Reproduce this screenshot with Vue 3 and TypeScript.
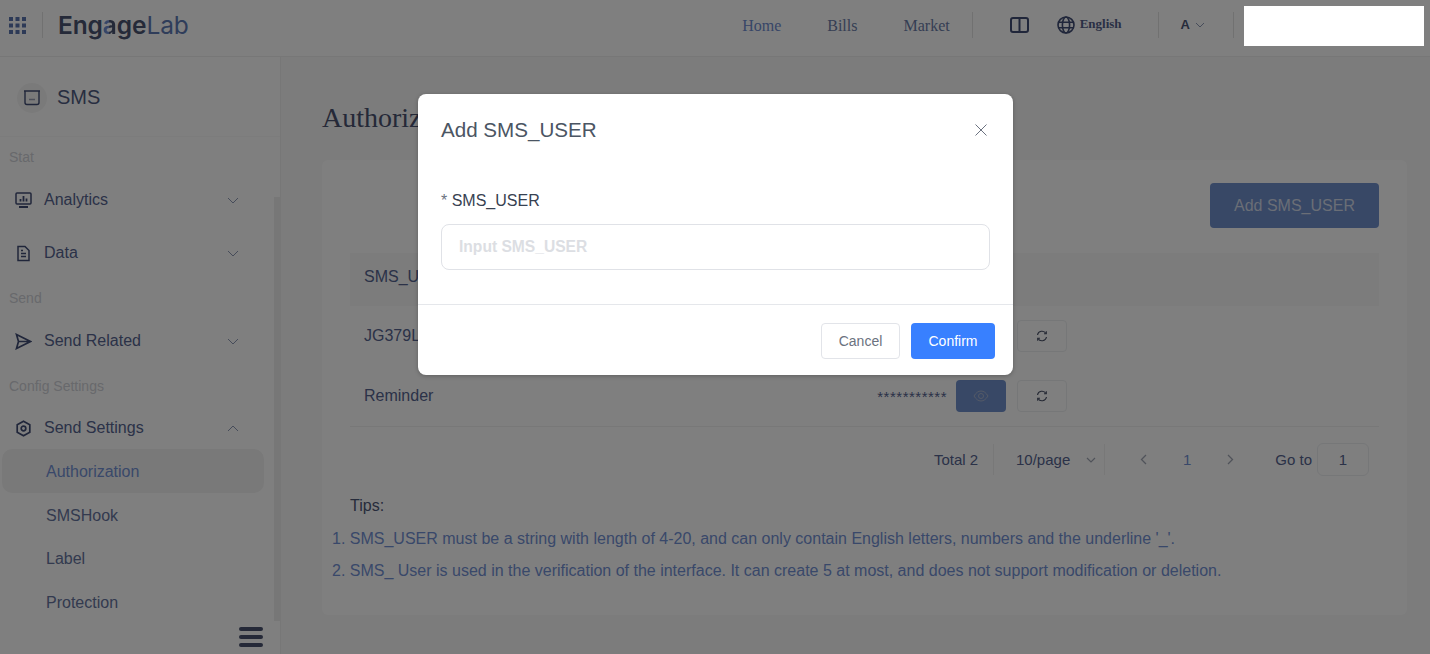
<script setup lang="ts">
import { ref } from 'vue'

interface SubItem {
  label: string
  active?: boolean
}

const subItems: SubItem[] = [
  { label: 'Authorization', active: true },
  { label: 'SMSHook' },
  { label: 'Label' },
  { label: 'Protection' }
]

const rows = [
  { name: 'JG379LX2', top: true },
  { name: 'Reminder', top: false }
]

const tips = [
  "SMS_USER must be a string with length of 4-20, and can only contain English letters, numbers and the underline '_'.",
  'SMS_ User is used in the verification of the interface. It can create 5 at most, and does not support modification or deletion.'
]

const smsUser = ref('')
</script>

<template>
  <div class="page">
    <header class="topbar">
      <svg class="apps" width="17" height="17" viewBox="0 0 17 17">
        <g fill="#5a74ae">
          <rect x="0" y="0" width="4" height="4" /><rect x="6.5" y="0" width="4" height="4" /><rect x="13" y="0" width="4" height="4" />
          <rect x="0" y="6.5" width="4" height="4" /><rect x="6.5" y="6.5" width="4" height="4" /><rect x="13" y="6.5" width="4" height="4" />
          <rect x="0" y="13" width="4" height="4" /><rect x="6.5" y="13" width="4" height="4" /><rect x="13" y="13" width="4" height="4" />
        </g>
      </svg>
      <span class="bar bar-logo"></span>
      <div class="logo"><b>Eng<i>a</i>ge</b><span>Lab</span></div>

      <nav class="nav">
        <a class="nav-home">Home</a>
        <a>Bills</a>
        <a>Market</a>
      </nav>
      <span class="bar bar-nav"></span>
      <svg class="book" width="19" height="16" viewBox="0 0 19 16" fill="none" stroke="#414d75" stroke-width="2">
        <rect x="1" y="1" width="17" height="14" rx="2" />
        <path d="M9.5 1v14" />
      </svg>
      <svg class="globe" width="18" height="18" viewBox="0 0 18 18" fill="none" stroke="#414d75" stroke-width="1.6">
        <circle cx="9" cy="9" r="8" />
        <ellipse cx="9" cy="9" rx="3.6" ry="8" />
        <path d="M1.5 6.3h15M1.5 11.7h15" />
      </svg>
      <span class="lang">English</span>
      <span class="bar bar-lang"></span>
      <span class="user">A</span>
      <svg class="user-arrow" width="10" height="6" viewBox="0 0 10 6" fill="none" stroke="#8d99b5" stroke-width="1">
        <path d="M1 1l4 4 4-4" />
      </svg>
      <span class="bar bar-user"></span>
      <div class="redacted"></div>
    </header>

    <div class="body">
      <aside class="sidebar">
        <div class="product">
          <span class="product-icon">
            <svg width="18" height="16" viewBox="0 0 18 16" fill="none" stroke="#414d75" stroke-width="1.4">
              <path d="M1 1h16M2 1.500v11a2 2 0 0 0 2 2h10a2 2 0 0 0 2-2v-11" />
              <path d="M6.500 9.500h1M8.500 9.500h1M10.500 9.500h1" />
            </svg>
          </span>
          <span class="product-name">SMS</span>
        </div>

        <div class="group-label group-first">Stat</div>
        <div class="menu-item">
          <svg class="menu-icon" width="17" height="17" viewBox="0 0 17 17" fill="none" stroke="#414d75" stroke-width="1.500">
            <rect x="1" y="1" width="15" height="11" rx="1" />
            <path d="M5.500 9.500V7M8.500 9.500V4M11.500 9.500V6.500M4 15h9" stroke-width="1.800" />
          </svg>
          <span>Analytics</span>
          <svg class="chevron" width="12" height="7" viewBox="0 0 12 7" fill="none" stroke="#8d99b5" stroke-width="1">
            <path d="M1 1l5 5 5-5" />
          </svg>
        </div>
        <div class="menu-item menu-item-next">
          <svg class="menu-icon" width="17" height="17" viewBox="0 0 17 17" fill="none" stroke="#414d75" stroke-width="1.500">
            <path d="M3 1.500h7l4 4v10H3z" />
            <path d="M6 8.500h5M6 11.500h5M6 5.500h2" />
          </svg>
          <span>Data</span>
          <svg class="chevron" width="12" height="7" viewBox="0 0 12 7" fill="none" stroke="#8d99b5" stroke-width="1">
            <path d="M1 1l5 5 5-5" />
          </svg>
        </div>

        <div class="group-label">Send</div>
        <div class="menu-item">
          <svg class="menu-icon" width="17" height="17" viewBox="0 0 17 17" fill="none" stroke="#414d75" stroke-width="1.700">
            <path d="M1.500 1.500l14 7-14 7 2-7zM3.500 8.500h12" />
          </svg>
          <span>Send Related</span>
          <svg class="chevron" width="12" height="7" viewBox="0 0 12 7" fill="none" stroke="#8d99b5" stroke-width="1">
            <path d="M1 1l5 5 5-5" />
          </svg>
        </div>

        <div class="group-label group-config">Config Settings</div>
        <div class="menu-item">
          <svg class="menu-icon" width="17" height="17" viewBox="0 0 17 17" fill="none" stroke="#414d75" stroke-width="1.700">
            <path d="M8.500 1.200l6.300 3.600v7.400l-6.300 3.600-6.300-3.600V4.800z" />
            <circle cx="8.500" cy="8.500" r="2.300" />
          </svg>
          <span>Send Settings</span>
          <svg class="chevron" width="12" height="7" viewBox="0 0 12 7" fill="none" stroke="#8d99b5" stroke-width="1">
            <path d="M1 6l5-5 5 5" />
          </svg>
        </div>

        <div
          v-for="item in subItems"
          :key="item.label"
          class="sub-item"
          :class="{ 'sub-item-active': item.active }"
        >
          {{ item.label }}
        </div>

        <div class="scroll-thumb"></div>
        <div class="hamburger"><i></i><i></i><i></i></div>
      </aside>

      <main class="main">
        <h1 class="title">Authorization</h1>
        <section class="card">
          <div class="toolbar">
            <button class="add-btn">Add SMS_USER</button>
          </div>

          <div class="table-head">SMS_USER</div>
          <div v-for="row in rows" :key="row.name" class="table-row" :class="{ 'table-row-last': !row.top }">
            <span class="row-name">{{ row.name }}</span>
            <div class="secret">
              <span class="stars">***********</span>
              <button class="eye-btn">
                <svg width="16" height="12" viewBox="0 0 16 12" fill="none" stroke="#a9b4cc" stroke-width="1">
                  <path d="M1 6c2-3.300 4.300-5 7-5s5 1.700 7 5c-2 3.300-4.300 5-7 5s-5-1.700-7-5z" />
                  <circle cx="8" cy="6" r="2.500" />
                </svg>
              </button>
              <button class="refresh-btn">
                <svg width="12" height="12" viewBox="0 0 12 12" fill="none" stroke="#4a5268" stroke-width="1.100">
                  <path d="M1.500 5A4.600 4.600 0 0 1 10 3.500M10.500 7A4.600 4.600 0 0 1 2 8.500" />
                  <path d="M10.300 1.300v2.400H8M1.700 10.700V8.300H4" />
                </svg>
              </button>
            </div>
          </div>

          <div class="pager">
            <span class="pager-total">Total 2</span>
            <div class="pager-size">
              <span>10/page</span>
              <svg width="10" height="6" viewBox="0 0 10 6" fill="none" stroke="#a0a6b4" stroke-width="1.200">
                <path d="M1 1l4 4 4-4" />
              </svg>
            </div>
            <svg class="pager-prev" width="7" height="11" viewBox="0 0 7 11" fill="none" stroke="#a0a6b4" stroke-width="1.300">
              <path d="M6 1L1.500 5.500 6 10" />
            </svg>
            <span class="pager-num">1</span>
            <svg class="pager-next" width="7" height="11" viewBox="0 0 7 11" fill="none" stroke="#a0a6b4" stroke-width="1.300">
              <path d="M1 1l4.500 4.500L1 10" />
            </svg>
            <span class="pager-goto">Go to</span>
            <span class="pager-input">1</span>
          </div>

          <div class="tips-title">Tips:</div>
          <ol class="tips">
            <li v-for="tip in tips" :key="tip">{{ tip }}</li>
          </ol>
        </section>
      </main>
    </div>

    <div class="mask"></div>

    <div class="dialog">
      <div class="dialog-head">
        <span>Add SMS_USER</span>
        <svg width="12" height="12" viewBox="0 0 12 12" fill="none" stroke="#6b7280" stroke-width="1">
          <path d="M.5.500l11 11M11.500.500l-11 11" />
        </svg>
      </div>
      <div class="dialog-body">
        <label class="field-label"><em>*</em> SMS_USER</label>
        <input v-model="smsUser" class="field-input" placeholder="Input SMS_USER" />
      </div>
      <div class="dialog-foot">
        <button class="btn-cancel">Cancel</button>
        <button class="btn-confirm">Confirm</button>
      </div>
    </div>
  </div>
</template>

<style>
html,
body {
  margin: 0;
  height: 100%;
  overflow: hidden;
}
</style>

<style scoped>
.page {
  position: relative;
  width: 1430px;
  height: 654px;
  overflow: hidden;
  background: #f8f8f8;
  font-family: "Liberation Sans", Arial, sans-serif;
  color: #566490;
}

button {
  font-family: inherit;
  cursor: pointer;
}

/* top bar */
.topbar {
  display: flex;
  align-items: center;
  box-sizing: border-box;
  height: 57px;
  padding: 0 6px 6px 9px;
  background: #fff;
  border-bottom: 1px solid #eeeeee;
}

.bar {
  width: 1px;
  height: 26px;
  background: #e2e2e2;
}

.bar-logo {
  margin-left: 16px;
}

.logo {
  margin-left: 15px;
  font-family: Inter, "Liberation Sans", sans-serif;
  font-size: 24.500px;
  letter-spacing: -0.1px;
  line-height: 30px;
}

.logo b {
  font-weight: 600;
  color: #4b5472;
}

/* the a in the logo is half blue, half dark */
.logo i {
  font-style: normal;
  background: linear-gradient(90deg, #6f8cd0 45%, #4b5472 45%);
  -webkit-background-clip: text;
  background-clip: text;
  color: transparent;
}

.logo span {
  font-weight: 400;
  color: #5f7ab5;
}

.nav {
  display: flex;
  gap: 46px;
  margin-top: 1px;
  margin-left: auto;
  font-family: "Liberation Serif", serif;
  font-size: 16px;
  color: #6b7ca8;
}

.nav-home {
  color: #6f8cd0;
}

.bar-nav {
  margin-left: 22px;
}

.book {
  margin-left: 37px;
}

.globe {
  margin-left: 28px;
}

.lang {
  margin-left: 5px;
  margin-top: -2px;
  font-family: "Liberation Serif", serif;
  font-size: 13px;
  font-weight: 700;
  color: #53608a;
}

.bar-lang {
  margin-left: 36px;
}

.user {
  margin-left: 22px;
  margin-top: -2px;
  font-size: 13px;
  font-weight: 700;
  color: #4d5777;
}

.user-arrow {
  margin-left: 5px;
}

.bar-user {
  margin-left: 28px;
}

.redacted {
  position: relative;
  z-index: 3;
  width: 180px;
  height: 40px;
  margin-left: 10px;
  margin-top: 2px;
  background: #fff;
}

/* layout */
.body {
  display: flex;
  height: 597px;
}

/* sidebar */
.sidebar {
  position: relative;
  flex: none;
  box-sizing: border-box;
  width: 281px;
  background: #fff;
  border-right: 1px solid #eeeeee;
}

.product {
  display: flex;
  align-items: center;
  box-sizing: border-box;
  height: 80px;
  padding: 2px 0 0 17px;
  border-bottom: 1px solid #f8f8f8;
}

.product-icon {
  display: flex;
  align-items: center;
  justify-content: center;
  width: 30px;
  height: 30px;
  border-radius: 50%;
  background: #f5f5f5;
}

.product-name {
  margin-left: 10px;
  font-size: 20px;
  color: #515c82;
}

.group-label {
  height: 20px;
  margin: 14px 0 10px 9px;
  font-size: 14px;
  line-height: 20px;
  color: #d0d2d8;
}

.group-first {
  margin-top: 10px;
}

.group-config {
  margin-bottom: 9px;
}

.menu-item {
  display: flex;
  align-items: center;
  box-sizing: border-box;
  height: 44px;
  padding: 2px 0 0 15px;
  font-size: 16px;
  color: #566490;
}

.menu-item-next {
  margin-top: 9px;
}

.menu-icon {
  flex: none;
  margin-right: 12px;
}

.chevron {
  margin-left: auto;
  margin-right: 41px;
}

.sub-item {
  height: 43.700px;
  margin: 0 16px 0 2px;
  padding-left: 44px;
  border-radius: 10px;
  font-size: 16px;
  line-height: 45px;
  color: #66749e;
}

.sub-item-active {
  background: #f3f3f3;
  color: #7391d4;
}

.scroll-thumb {
  position: absolute;
  top: 140px;
  right: 0;
  width: 6px;
  height: 424px;
  background: #eeeeee;
}

.hamburger {
  position: absolute;
  left: 239px;
  top: 570px;
  display: flex;
  flex-direction: column;
  gap: 4px;
}

.hamburger i {
  display: block;
  width: 24px;
  height: 4px;
  border-radius: 2px;
  background: #4a5270;
}

/* content */
.main {
  flex: 1;
  min-width: 0;
  padding: 0 23px 0 41px;
}

.title {
  margin: 43px 0 0;
  font-family: "Liberation Serif", serif;
  font-size: 28px;
  font-weight: 400;
  line-height: 36px;
  color: #4a5270;
}

.card {
  box-sizing: border-box;
  height: 455px;
  margin-top: 24px;
  padding: 23px 28px 0;
  background: #fff;
  border-radius: 6px;
}

.toolbar {
  display: flex;
  justify-content: flex-end;
  height: 70px;
}

.add-btn {
  width: 169px;
  height: 45px;
  border: none;
  border-radius: 4px;
  background: #7090cc;
  font-size: 16px;
  color: #d4dcec;
}

.table-head {
  box-sizing: border-box;
  height: 53px;
  padding-left: 14px;
  background: #f8f8f8;
  font-size: 16px;
  line-height: 48px;
  color: #566490;
}

.table-row {
  display: flex;
  align-items: center;
  justify-content: space-between;
  height: 60px;
  padding-left: 14px;
  font-size: 16px;
  color: #566490;
}

.row-name {
  margin-top: -1px;
}

.table-row-last {
  height: 60px;
  border-bottom: 1px solid #f1f1f1;
}

.secret {
  display: flex;
  align-items: center;
  margin-right: 312px;
}

.stars {
  margin-right: 9px;
  font-size: 15px;
  letter-spacing: 0.500px;
}

.eye-btn,
.refresh-btn {
  display: flex;
  align-items: center;
  justify-content: center;
  width: 50px;
  height: 32px;
  padding: 0;
  border-radius: 4px;
}

.eye-btn {
  border: none;
  background: #7090cc;
}

.refresh-btn {
  margin-left: 11px;
  border: 1px solid #eceef1;
  background: #fff;
}

.pager {
  display: flex;
  align-items: center;
  height: 33px;
  margin-top: 16px;
  padding-left: 584px;
  font-size: 15px;
  color: #566490;
}

.pager-total {
  width: 59px;
}

.pager-size {
  display: flex;
  align-items: center;
  justify-content: space-between;
  box-sizing: border-box;
  width: 112px;
  height: 31px;
  padding: 0 8px 0 22px;
  border-left: 1px solid #f0f0f0;
  border-right: 1px solid #f0f0f0;
}

.pager-prev {
  margin-left: 35px;
}

.pager-num {
  margin-left: 36px;
  color: #7391d4;
}

.pager-next {
  margin-left: 36px;
}

.pager-goto {
  margin-left: 41px;
}

.pager-input {
  box-sizing: border-box;
  width: 52px;
  height: 33px;
  margin-left: 5px;
  border: 1px solid #eceef1;
  border-radius: 6px;
  line-height: 31px;
  text-align: center;
}

.tips-title {
  margin-top: 21px;
  font-size: 16px;
  line-height: 18px;
  color: #4d5777;
}

.tips {
  margin: 8px 0 0 -18px;
  padding: 0;
  list-style-position: inside;
  font-size: 16px;
  line-height: 32px;
  color: #7391d4;
}

/* dialog */
.mask {
  position: absolute;
  inset: 0;
  z-index: 2;
  background: rgba(0, 0, 0, 0.5);
}

.dialog {
  position: absolute;
  left: 418px;
  top: 94px;
  z-index: 4;
  width: 595px;
  height: 281px;
  background: #fff;
  border-radius: 8px;
  box-shadow: 0 1px 4px rgba(0, 0, 0, 0.25);
}

.dialog-head {
  display: flex;
  align-items: center;
  justify-content: space-between;
  height: 72px;
  padding: 0 26px 0 23px;
  font-size: 20.600px;
  color: #4b5563;
}

.dialog-body {
  box-sizing: border-box;
  height: 139px;
  padding: 26px 23px 0;
  border-bottom: 1px solid #e5e7eb;
}

.field-label {
  display: block;
  font-size: 16px;
  line-height: 18px;
  color: #374151;
}

.field-label em {
  font-style: normal;
  color: #6b7280;
}

.field-input {
  display: block;
  box-sizing: border-box;
  width: 549px;
  height: 46px;
  margin-top: 14px;
  padding: 0 17px;
  border: 1px solid #e0e2e7;
  border-radius: 8px;
  outline: none;
  font-family: inherit;
  font-size: 15.600px;
  font-weight: 700;
}

.field-input::placeholder {
  color: #dcdee3;
}

.dialog-foot {
  display: flex;
  justify-content: flex-end;
  gap: 11px;
  padding: 18px 18px 0 0;
}

.btn-cancel,
.btn-confirm {
  height: 36px;
  border-radius: 4px;
  font-size: 14px;
}

.btn-cancel {
  width: 79px;
  border: 1px solid #e2e4e9;
  background: #fff;
  color: #6b7280;
}

.btn-confirm {
  width: 84px;
  border: none;
  background: #3880ff;
  color: #fff;
}
</style>
